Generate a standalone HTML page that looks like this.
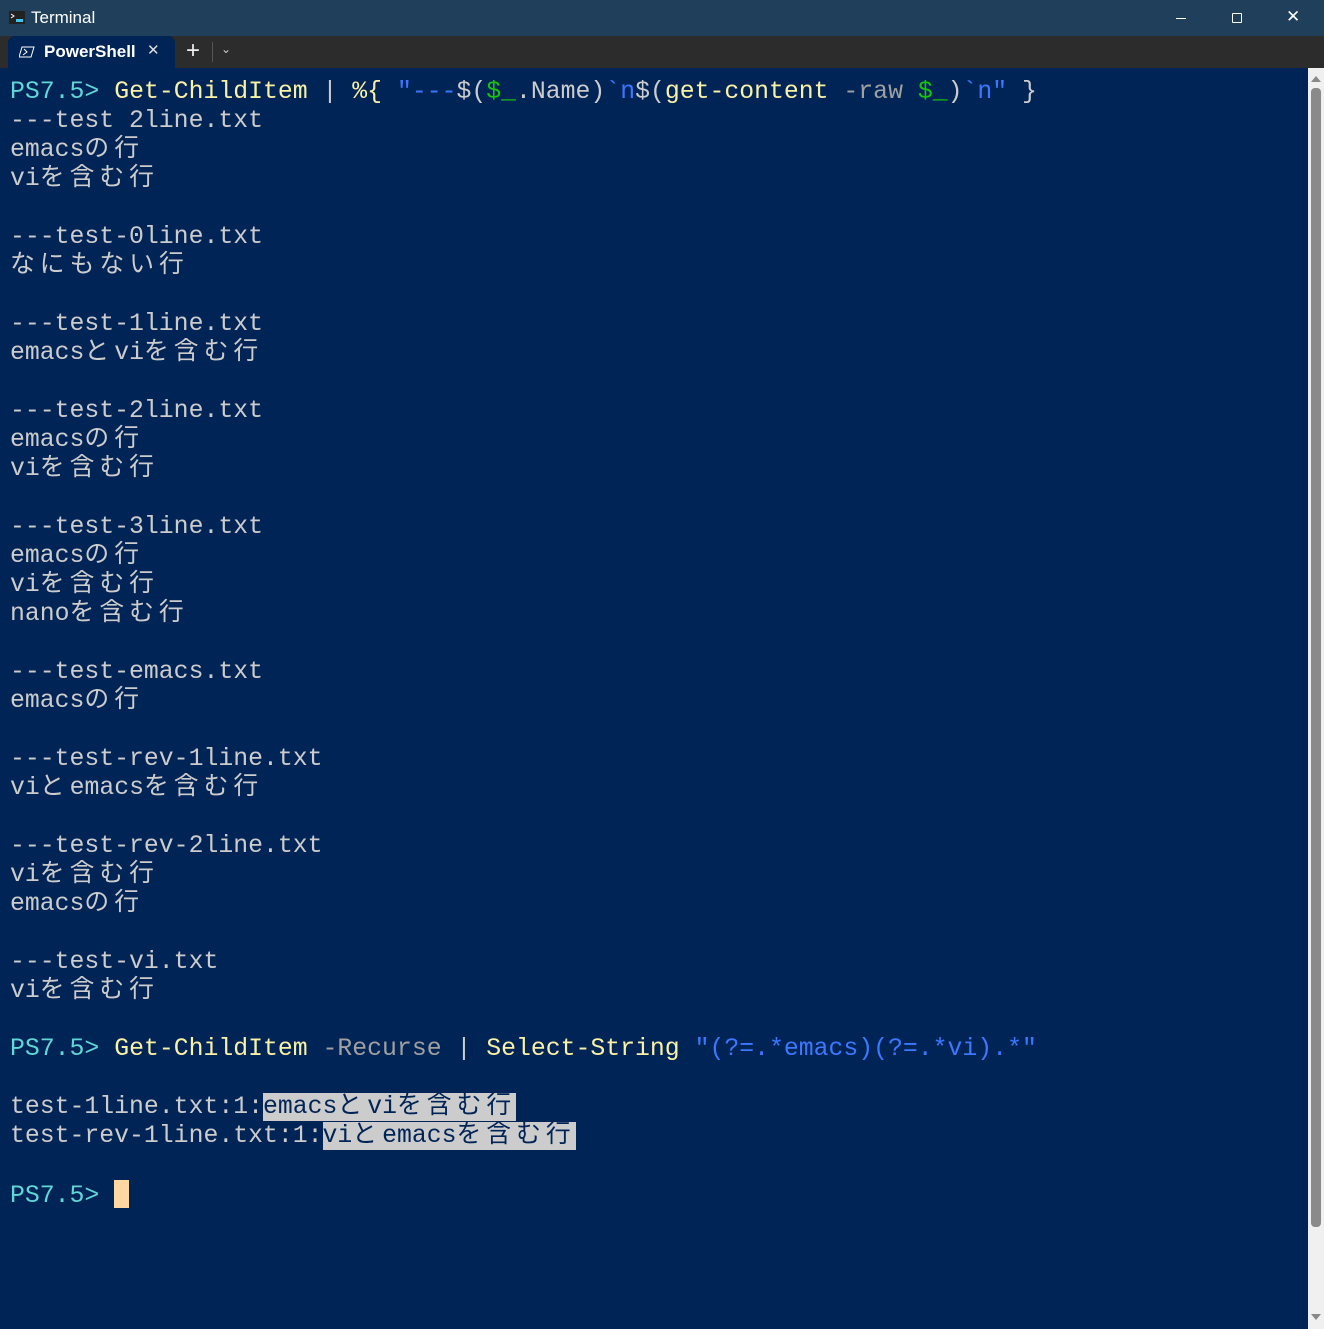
<!DOCTYPE html>
<html><head><meta charset="utf-8"><style>
body{margin:0;width:1324px;height:1329px;background:#012456;overflow:hidden;position:relative;font-family:"Liberation Sans",sans-serif}
.title{position:absolute;left:0;top:0;width:1324px;height:36px;background:#1f3f5b}
.tabs{position:absolute;left:0;top:36px;width:1324px;height:32px;background:#2c2c2c}
.tab{position:absolute;left:8px;top:0;width:167px;height:32px;background:#012456;border-radius:7px 7px 0 0}
pre{position:absolute;left:10px;top:78px;margin:0;font-family:"Liberation Mono","Noto Sans CJK JP",monospace;font-size:24.8px;line-height:29px;color:#cccccc;white-space:pre}
.j{letter-spacing:5px}
.c{color:#61d6d6}.y{color:#f9f1a5}.b{color:#3b78ff}.g{color:#16c60c}.d{color:#a0a0a0}
.h{background:#cccccc;color:#012456}
.sb{position:absolute;left:1308px;top:68px;width:16px;height:1261px;background:#f0f0f0}
.cur{display:inline-block;width:15px;height:28px;background:#ffd7a0;vertical-align:-6px}
</style></head><body>
<div class="title">
<svg style="position:absolute;left:9px;top:11px" width="16" height="14"><rect x="0" y="0" width="16" height="13" fill="#222"/><path d="M2 3l3 2-3 2" stroke="#fff" fill="none"/><rect x="7" y="8" width="7" height="3" fill="#3cc6f0"/></svg>
<div style="position:absolute;left:31px;top:8px;color:#fff;font-size:17px">Terminal</div>
<div style="position:absolute;left:1176px;top:18px;width:10px;height:1px;background:#fff"></div>
<div style="position:absolute;left:1232px;top:13px;width:8px;height:8px;border:1px solid #fff;border-radius:1px"></div>
<div style="position:absolute;left:1286px;top:7px;color:#fff;font-size:17px">✕</div>
</div>
<div class="tabs">
<div class="tab">
<svg style="position:absolute;left:11px;top:10px" width="16" height="12"><path d="M3 1h12l-3 10H0z" fill="none" stroke="#fff"/><path d="M5 3l3 3-4 3" stroke="#fff" fill="none"/></svg>
<div style="position:absolute;left:36px;top:6px;color:#fff;font-size:17px;font-weight:bold">PowerShell</div>
<div style="position:absolute;left:139px;top:5px;color:#ddd;font-size:15px">✕</div>
</div>
<div style="position:absolute;left:186px;top:1px;color:#eee;font-size:24px">+</div>
<div style="position:absolute;left:212px;top:6px;width:1px;height:20px;background:#555"></div>
<div style="position:absolute;left:221px;top:6px;color:#ccc;font-size:12px">⌄</div>
</div>
<pre><span class="c">PS7.5&gt;</span> <span class="y">Get-ChildItem</span> | <span class="y">%{</span> <span class="b">"---</span>$(<span class="g">$_</span>.Name)<span class="b">`n</span>$(<span class="y">get-content</span> <span class="d">-raw</span> <span class="g">$_</span>)<span class="b">`n"</span> }
---test 2line.txt
emacs<span class="j">の行</span>
vi<span class="j">を含む行</span>

---test-0line.txt
<span class="j">なにもない行</span>

---test-1line.txt
emacs<span class="j">と</span>vi<span class="j">を含む行</span>

---test-2line.txt
emacs<span class="j">の行</span>
vi<span class="j">を含む行</span>

---test-3line.txt
emacs<span class="j">の行</span>
vi<span class="j">を含む行</span>
nano<span class="j">を含む行</span>

---test-emacs.txt
emacs<span class="j">の行</span>

---test-rev-1line.txt
vi<span class="j">と</span>emacs<span class="j">を含む行</span>

---test-rev-2line.txt
vi<span class="j">を含む行</span>
emacs<span class="j">の行</span>

---test-vi.txt
vi<span class="j">を含む行</span>

<span class="c">PS7.5&gt;</span> <span class="y">Get-ChildItem</span> <span class="d">-Recurse</span> | <span class="y">Select-String</span> <span class="b">"(?=.*emacs)(?=.*vi).*"</span>

test-1line.txt:1:<span class="h">emacs<span class="j">と</span>vi<span class="j">を含む行</span></span>
test-rev-1line.txt:1:<span class="h">vi<span class="j">と</span>emacs<span class="j">を含む行</span></span>

<span class="c">PS7.5&gt;</span> <span class="cur"></span></pre>
<div class="sb">
<div style="position:absolute;left:3px;top:8px;width:0;height:0;border-left:5px solid transparent;border-right:5px solid transparent;border-bottom:6px solid #888"></div>
<div style="position:absolute;left:3px;top:20px;width:10px;height:1139px;background:#8a8a8a;border-radius:4px"></div>
<div style="position:absolute;left:3px;top:1246px;width:0;height:0;border-left:5px solid transparent;border-right:5px solid transparent;border-top:6px solid #888"></div>
</div>
</body></html>
